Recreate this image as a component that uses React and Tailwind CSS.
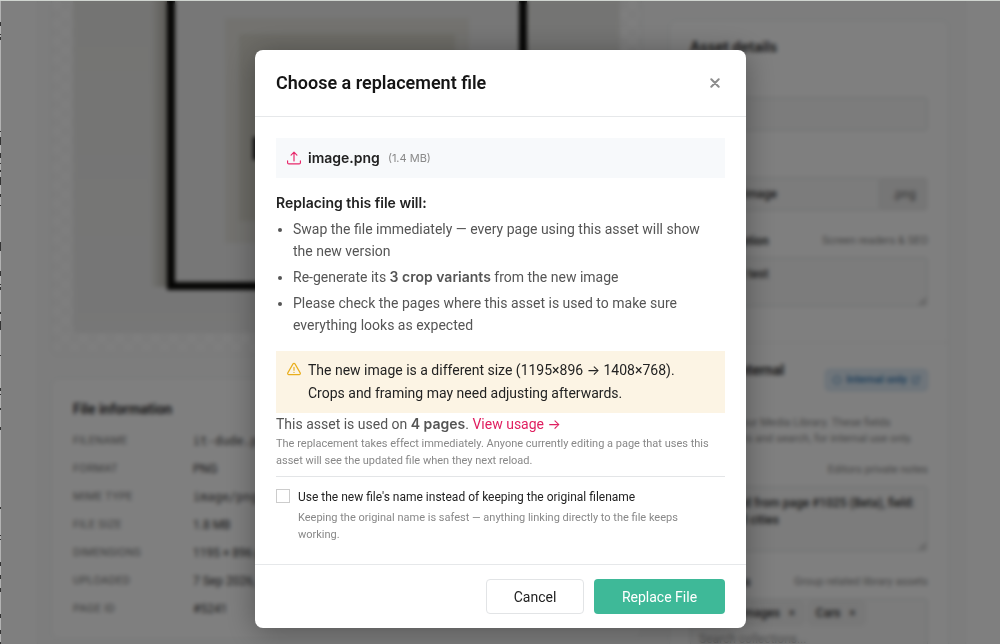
import { useState } from 'react';

const fileInfo = [
  ['Filename', 'it-dude.png', 'mono'],
  ['Format', 'PNG'],
  ['Mime type', 'image/png', 'mono'],
  ['File size', '1.8 MB'],
  ['Dimensions', '1195 × 896 px'],
  ['Uploaded', '7 Sep 2026, 10:24'],
  ['Page ID', '#5241'],
];

// slivers of the neighbouring window: [y, height]
const edgeMarks = [
  [22, 4], [34, 1], [37, 3], [131, 1], [137, 8], [153, 5], [163, 1], [170, 2], [177, 8], [194, 3],
  [205, 1], [242, 9], [271, 5], [284, 1], [287, 3], [312, 2], [321, 9], [355, 1], [388, 3], [394, 1],
  [408, 2], [427, 3], [507, 2], [535, 1], [539, 1], [562, 4], [575, 4], [588, 4], [614, 4], [630, 4], [642, 2],
];

const fieldClass =
  'block w-full rounded-sm border border-[#dde1e1] bg-[#f8f8f8] px-[11px] text-xs font-medium text-[#333]';

function UploadIcon() {
  return (
    <svg viewBox="0 0 24 24" className="size-[14px] shrink-0" fill="none" stroke="#e8286b" strokeWidth="2" strokeLinecap="round" strokeLinejoin="round" aria-hidden="true">
      <path d="M12 17V2M7 7l5-5 5 5" />
      <path d="M1 17v3a2 2 0 0 0 2 2h18a2 2 0 0 0 2-2v-3" />
    </svg>
  );
}

function WarningIcon() {
  return (
    <svg viewBox="0 0 24 24" className="mt-[3px] size-[14px] shrink-0" fill="none" stroke="#e9ae1c" strokeWidth="2" strokeLinecap="round" strokeLinejoin="round" aria-hidden="true">
      <path d="M10.3 3.2 1.4 18.6A2 2 0 0 0 3.1 21.6h17.8a2 2 0 0 0 1.7-3L13.7 3.2a2 2 0 0 0-3.4 0z" />
      <path d="M12 9v5M12 17.5v.5" />
    </svg>
  );
}

function Artwork() {
  return (
    <svg viewBox="0 0 547 332" preserveAspectRatio="xMinYMin slice" className="block h-[332px] w-full" role="img" aria-label="Framed print on a wall">
      <defs>
        <linearGradient id="shade" x1="0" x2="1">
          <stop offset="0" stopColor="#e9e9e6" />
          <stop offset="1" stopColor="#b0aea4" />
        </linearGradient>
        <linearGradient id="wall" x1="0" x2="0" y1="0" y2="1">
          <stop offset="0" stopColor="#e9e9e6" />
          <stop offset="1" stopColor="#eeeeee" />
        </linearGradient>
      </defs>
      <rect width="547" height="332" fill="url(#wall)" />
      <rect x="78" y="0" width="18" height="286" fill="url(#shade)" />
      <rect x="94" y="-20" width="360" height="309" fill="#0a0a08" />
      <rect x="102" y="-20" width="344" height="301" fill="#eeeeee" />
      <rect x="152" y="17" width="244" height="225" fill="#e6e5df" />
      <rect x="166" y="33" width="216" height="187" fill="#dad8ce" />
      <rect x="180" y="136" width="9" height="23" fill="#222" />
    </svg>
  );
}

function FileCards() {
  return (
    <div className="min-w-0 flex-1">
      <div className="rounded-b-lg border border-t-0 border-[#eceeee] bg-[repeating-conic-gradient(#f8f8f8_0_25%,#fdfdfd_0_50%)] bg-[length:18px_18px] px-[21px] pb-[21px]">
        <Artwork />
      </div>
      <section className="mt-[23px] rounded-lg border border-[#eff1f1] bg-white px-[21px] pt-5 pb-[15px]">
        <h2 className="text-sm leading-5 font-semibold text-[#222]">File information</h2>
        <dl className="mt-2">
          {fileInfo.map(([label, value, kind]) => (
            <div key={label} className="flex h-7 items-center text-[11px]">
              <dt className="w-[120px] tracking-wide text-[#777] uppercase">{label}</dt>
              <dd className={kind === 'mono' ? "font-['DejaVu_Sans_Mono',monospace] text-xs text-[#444]" : 'text-xs text-[#333]'}>
                {value}
              </dd>
            </div>
          ))}
        </dl>
      </section>
    </div>
  );
}

function FieldLabel({ htmlFor, label, hint }) {
  return (
    <div className="mb-2 flex justify-between text-[11px] leading-4">
      <label htmlFor={htmlFor} className="text-xs leading-4 font-semibold text-[#333]">{label}</label>
      {hint && <span className="text-[#888]">{hint}</span>}
    </div>
  );
}

function Chip({ children }) {
  return (
    <span className="flex h-6 items-center gap-2 rounded-sm border border-[#e6e6e6] bg-[#f0f0f0] px-[7px] text-xs font-medium text-[#333]">
      {children}
      <button type="button" aria-label={`Remove ${children}`} className="w-2 text-[#555]">×</button>
    </span>
  );
}

function AssetDetails() {
  return (
    <section className="mt-[19px] w-[280px] shrink-0 self-start rounded-lg border border-[#eef1f1] bg-white pb-6">
      <div className="border-b border-[#ededed] px-5 pt-4 pb-[35px]">
        <h2 className="mb-4 font-['Inter',sans-serif] text-sm leading-5 font-semibold text-[#222]">Asset details</h2>
        <FieldLabel htmlFor="title" label="Title" />
        <input id="title" className={`${fieldClass} mb-[22px] h-[34px]`} />
        <FieldLabel htmlFor="filename" label="Filename" />
        <div className="mb-[22px] flex">
          <input id="filename" defaultValue="it-dude-image" className={`${fieldClass} h-[34px] min-w-0`} />
          <span className="flex w-12 shrink-0 items-center justify-center rounded-r-sm bg-[#ececec] text-xs text-[#666]">.png</span>
        </div>
        <FieldLabel htmlFor="alt" label="Alt description" hint="Screen readers & SEO" />
        <textarea id="alt" defaultValue="Alternat test" className={`${fieldClass} h-[50px] py-2 leading-4`} />
      </div>
      <div className="px-5 pt-[17px]">
        <div className="flex items-center justify-between">
          <h2 className="w-[110px] text-sm leading-5 font-semibold text-[#222]">Tags &amp; internal details</h2>
          <a href="#internal" className="flex h-[22px] items-center gap-1 rounded-sm border border-[#c0d8ec] bg-[#e0ecf6] px-[6px] text-[11px] font-medium whitespace-nowrap text-[#2c74b0]">
            <svg viewBox="0 0 12 12" className="size-[10px]" fill="none" stroke="currentColor" aria-hidden="true"><circle cx="6" cy="6" r="4.5" /></svg>
            Internal only
            <svg viewBox="0 0 12 12" className="size-[10px]" fill="none" stroke="currentColor" aria-hidden="true"><path d="M5 2H2v8h7V7M7 2h3v3M10 2 6 6" /></svg>
          </a>
        </div>
        <p className="mt-[15px] mb-[15px] text-[11px] leading-4 text-[#888]">
          Organise your Media Library. These fields<br />are for filters and search, for internal use only.
        </p>
        <FieldLabel htmlFor="notes" label="Notes" hint="Editors private notes" />
        <textarea id="notes" defaultValue={'Imported from page #1025 (Beta), field:\nfeatured cities'} className={`${fieldClass} mb-[22px] h-[66px] py-2 leading-[17px]`} />
        <FieldLabel htmlFor="collections" label="Collections" hint="Group related library assets" />
        <div className="rounded-sm border border-[#dde1e1] bg-[#f8f8f8] px-2 py-[2px]">
          <div className="flex justify-start gap-1">
            <Chip>Stock images</Chip>
            <Chip>Cars</Chip>
          </div>
          <input id="collections" placeholder="Search collections..." className="mt-[2px] h-6 w-full text-xs placeholder:text-[#999]" />
        </div>
      </div>
    </section>
  );
}

function ReplaceDialog() {
  const [useNewName, setUseNewName] = useState(false);

  return (
    <div role="dialog" aria-modal="true" aria-labelledby="dialog-title" className="w-full max-w-[491px] rounded-lg bg-white text-[#555] shadow-[0_4px_30px_rgba(0,0,0,0.35)]">
      <header className="flex items-center justify-between border-b border-[#e6e8ea] px-[21px] py-5">
        <h1 id="dialog-title" className="text-lg leading-[26px] font-semibold text-[#151515]">Choose a replacement file</h1>
        <button type="button" aria-label="Close" className="flex size-5 items-center justify-center">
          <svg viewBox="0 0 10 10" className="size-[10px]" stroke="#8c8c8c" strokeWidth="2" strokeLinecap="round" aria-hidden="true">
            <path d="M1.3 1.3l7.4 7.4M8.7 1.3 1.3 8.7" />
          </svg>
        </button>
      </header>

      <div className="px-[21px] pt-[21px] pb-[21px] text-sm leading-[22px]">
        <div className="flex h-10 items-center bg-[#f7f9fb] px-[11px] font-['Inter',sans-serif]">
          <UploadIcon />
          <strong className="ml-[7px] font-semibold text-[#222]">image.png</strong>
          <span className="ml-2 text-[11px] text-[#888]">(1.4 MB)</span>
        </div>

        <h2 className="mt-[14px] font-['Inter',sans-serif] font-semibold text-[#222]">Replacing this file will:</h2>
        <ul className="mt-1 list-disc space-y-1 pr-2 pl-[17px] marker:text-[#555]">
          <li>Swap the file immediately — every page using this asset will show the new version</li>
          <li>Re-generate its <strong className="font-['Inter',sans-serif] font-semibold">3 crop variants</strong> from the new image</li>
          <li>Please check the pages where this asset is used to make sure everything looks as expected</li>
        </ul>

        <div className="mt-[15px] flex gap-[7px] bg-[#fcf4e4] px-[11px] py-2 leading-[23px] text-[#222]">
          <WarningIcon />
          <p>The new image is a different size (1195×896 → 1408×768). Crops and framing may need adjusting afterwards.</p>
        </div>

        <p>
          This asset is used on <strong className="font-['Inter',sans-serif] font-semibold">4 pages</strong>.{' '}
          <a href="#usage" className="text-[#e01e5f]">View usage →</a>
        </p>
        <p className="text-[11px] leading-[17px] text-[#888]">
          The replacement takes effect immediately. Anyone currently editing a page that uses this asset will see the updated file when they next reload.
        </p>

        <div className="mt-[7px] flex gap-2 border-t border-[#e3e5e7] pt-3">
          <input
            id="use-new-name"
            type="checkbox"
            checked={useNewName}
            onChange={(e) => setUseNewName(e.target.checked)}
            aria-describedby="name-help"
            className="size-[14px] shrink-0 appearance-none border border-[#ccc] bg-white checked:bg-[#3eb998]"
          />
          <div>
            <label htmlFor="use-new-name" className="block text-xs leading-4 text-[#222]">
              Use the new file's name instead of keeping the original filename
            </label>
            <p id="name-help" className="mt-1 max-w-[400px] text-[11px] leading-[17px] text-[#888]">
              Keeping the original name is safest — anything linking directly to the file keeps working.
            </p>
          </div>
        </div>
      </div>

      <footer className="flex justify-end gap-[10px] border-t border-[#e6e8ea] px-[21px] py-[14px] text-sm">
        <button type="button" className="h-[35px] w-[98px] rounded-sm border border-[#e2e4e6] bg-white text-[#222]">Cancel</button>
        <button type="button" className="h-[35px] w-[131px] rounded-sm bg-[#3eb998] text-white">Replace File</button>
      </footer>
    </div>
  );
}

export default function App() {
  return (
    <div className="relative h-screen overflow-hidden border-t border-[#cfd4cf] bg-white font-['Roboto','Inter',sans-serif]">
      <div className="mr-[34px] ml-[37px] flex gap-[27px] border-x border-[#f2f4f4] bg-[#fafafa] pr-[16px] pl-[13px] pb-20">
        <FileCards />
        <AssetDetails />
      </div>
      <svg className="absolute top-0 left-0 h-full w-px bg-[#b2b2b2]" aria-hidden="true">
        {edgeMarks.map(([y, h]) => (
          <rect key={y} x="0" y={y - 1} width="1" height={h} fill="#333" />
        ))}
      </svg>
      <div className="fixed top-px right-0 bottom-0 left-px flex items-start justify-center bg-black/50 pt-[49px] backdrop-blur-[2px]">
        <ReplaceDialog />
      </div>
    </div>
  );
}
